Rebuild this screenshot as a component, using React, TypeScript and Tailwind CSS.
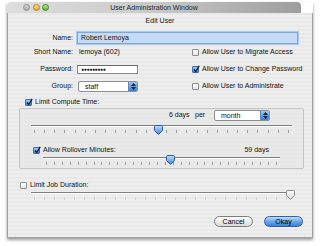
import React from "react";

function Check({ on }: { on?: boolean }) {
  return (
    <span
      className={[
        "relative mr-[1px] inline-block h-[7px] w-[7px] shrink-0 rounded-[1px] border",
        on
          ? "border-[#3a6db5] bg-gradient-to-b from-[#a9cdf5] to-[#3f86d9]"
          : "border-[#8f8f8f] bg-gradient-to-b from-white to-[#e6e6e6]",
      ].join(" ")}
    >
      {on && (
        <svg width="7" height="8" viewBox="0 0 7 8" className="absolute left-[0px] top-[-2px]">
          <path d="M1 4.5 L2.8 6.5 L6.2 0.8" fill="none" stroke="#1a1a2e" strokeWidth="1.3" />
        </svg>
      )}
    </span>
  );
}

function Popup({ label, w }: { label: string; w: string }) {
  return (
    <div className={`flex h-[11px] ${w} items-stretch overflow-hidden rounded-[2px] border border-[#8e8e8e] bg-white`}>
      <span className="flex-1 pl-[6px] leading-[9px]">{label}</span>
      <span className="flex w-[9px] flex-col items-center justify-center gap-[1px] border-l border-[#5a86c4] bg-gradient-to-b from-[#9fc6f1] to-[#3d7fd2]">
        <svg width="5" height="3" viewBox="0 0 5 3"><path d="M0 3 L2.5 0 L5 3 Z" fill="#13243d" /></svg>
        <svg width="5" height="3" viewBox="0 0 5 3"><path d="M0 0 L2.5 3 L5 0 Z" fill="#13243d" /></svg>
      </span>
    </div>
  );
}

function Thumb({ left, blue }: { left: string; blue?: boolean }) {
  return (
    <svg width="9" height="10" viewBox="0 0 9 10" className="absolute top-0 -ml-[4.5px]" style={{ left }}>
      <defs>
        <linearGradient id={blue ? "tb" : "tg"} x1="0" y1="0" x2="0" y2="1">
          <stop offset="0" stopColor={blue ? "#c5defa" : "#ffffff"} />
          <stop offset="1" stopColor={blue ? "#3f83d6" : "#d6d6d6"} />
        </linearGradient>
      </defs>
      <path
        d="M0.5 1.5 Q0.5 0.5 1.5 0.5 H7.5 Q8.5 0.5 8.5 1.5 V5.5 L4.5 9.5 L0.5 5.5 Z"
        fill={`url(#${blue ? "tb" : "tg"})`}
        stroke={blue ? "#2f5c99" : "#8a8a8a"}
        strokeWidth="1"
      />
    </svg>
  );
}

function Slider({ w, ml, pos, ticks, blue = true, faint }: { w: string; ml: string; pos: number; ticks: number; blue?: boolean; faint?: boolean }) {
  return (
    <div className={`relative h-[10px] ${w} ${ml}`}>
      <div className="mt-[2px] h-[2px] border-b border-white bg-[#7d7d7d]" />
      <div className="mt-[3px] flex h-[3px] justify-between px-[3px]">
        {Array.from({ length: ticks }).map((_, i) => (
          <span key={i} className={faint ? "w-px bg-[#d2d2d2]" : "w-px bg-[#9a9a9a]"} />
        ))}
      </div>
      <Thumb left={`${pos * 100}%`} blue={blue} />
    </div>
  );
}

export default function App() {
  return (
    <div className="h-[246px] w-[322px] overflow-hidden bg-white pl-[7px] pt-[2px] font-['Liberation_Sans',sans-serif] text-[7px] text-[#111]">
      <div className="flex h-[236px] w-[306px] flex-col shadow-[0_2px_3px_rgba(0,0,0,0.4)]">
        {/* title bar */}
        <div className="grid h-[11px] w-[294px] grid-cols-[1fr_auto_1fr] items-center rounded-t-[4px] bg-gradient-to-r from-[#dedede] via-[#c9c9c9] to-[#9d9d9d] text-[#1f1f1f]">
          <div className="flex gap-[2.5px] pl-[16px]">
            <span className="h-[7px] w-[7px] rounded-full border border-[#8d8d8d] bg-gradient-to-b from-[#d9d9d9] to-[#a9a9a9]" />
            <span className="h-[7px] w-[7px] rounded-full border border-[#b5830f] bg-gradient-to-b from-[#ffe28a] to-[#f0a416]" />
            <span className="h-[7px] w-[7px] rounded-full border border-[#3c8a1f] bg-gradient-to-b from-[#bff08a] to-[#4cb52a]" />
          </div>
          <span className="leading-[11px]">User Administration Window</span>
          <span />
        </div>

        {/* body */}
        <div className="flex flex-1 flex-col border-x border-b border-[#a0a0a0] bg-[repeating-linear-gradient(0deg,#eeeeee_0px,#eeeeee_2px,#e8e8e8_2px,#e8e8e8_4px)]">
          <div className="pt-[3px] text-center leading-[10px]">Edit User</div>

          <div className="mt-[6px] flex h-[12px] items-center">
            <span className="w-[65px] text-right">Name:</span>
            <div className="ml-[4px] flex h-[12px] w-[221px] items-center border border-[#7ea6d9] bg-[#c4dbf6] pl-[3px] shadow-[0_0_0_1px_#a9c8ee]">
              Robert Lemoya
            </div>
          </div>

          <div className="flex">
            <div className="flex w-[184px] flex-col">
              <div className="flex h-[17px] items-center">
                <span className="w-[65px] text-right">Short Name:</span>
                <span className="ml-[6px]">lemoya (602)</span>
              </div>
              <div className="flex h-[17px] items-center">
                <span className="w-[65px] text-right">Password:</span>
                <div className="ml-[4px] flex h-[9px] w-[61px] items-center border border-[#8a8a8a] border-t-[#6a6a6a] bg-white pl-[3px] text-[5px] tracking-[-0.3px]">
                  ●●●●●●●●●
                </div>
              </div>
              <div className="flex h-[17px] items-center">
                <span className="w-[65px] text-right">Group:</span>
                <div className="ml-[5px]">
                  <Popup label="staff" w="w-[60px]" />
                </div>
              </div>
            </div>
            <div className="flex flex-col">
              <div className="flex h-[17px] items-center gap-[2px]">
                <Check />
                <span>Allow User to Migrate Access</span>
              </div>
              <div className="flex h-[17px] items-center gap-[2px]">
                <Check on />
                <span>Allow User to Change Password</span>
              </div>
              <div className="flex h-[17px] items-center gap-[2px]">
                <Check />
                <span>Allow User to Administrate</span>
              </div>
            </div>
          </div>

          <div className="ml-[17px] mt-[2px] flex h-[10px] items-center gap-[2px]">
            <Check on />
            <span>Limit Compute Time:</span>
          </div>

          {/* group box */}
          <div className="ml-[11px] mt-[1px] flex h-[61px] w-[285px] flex-col rounded-[2px] border border-[#c4c4c4] bg-[#e6e6e6]/60">
            <div className="mt-[1px] flex h-[11px] items-center">
              <span className="ml-[149px] w-[25px]">6 days</span>
              <span className="ml-[1px] w-[19px]">per</span>
              <Popup label="month" w="w-[56px]" />
            </div>
            <div className="mt-[2px]">
              <Slider w="w-[261px]" ml="ml-[11px]" pos={0.487} ticks={26} />
            </div>
            <div className="mt-[10px] flex h-[10px] items-center justify-between pl-[13px] pr-[34px]">
              <div className="flex items-center gap-[2px]">
                <Check on />
                <span>Allow Rollover Minutes:</span>
              </div>
              <span>59 days</span>
            </div>
            <Slider w="w-[237px]" ml="ml-[23px]" pos={0.54} ticks={30} />
          </div>

          <div className="ml-[12px] mt-[12px] flex h-[9px] items-center gap-[2px]">
            <Check />
            <span>Limit Job Duration:</span>
          </div>
          <Slider w="w-[259px]" ml="ml-[23px]" pos={1} ticks={26} blue={false} faint />

          <div className="mt-[16px] flex justify-end gap-[11px] pr-[9px]">
            <button className="h-[11px] w-[39px] rounded-full border border-[#7d7d7d] bg-gradient-to-b from-white via-[#ececec] to-[#d9d9d9] leading-[9px] text-black">
              Cancel
            </button>
            <button className="h-[11px] w-[39px] rounded-full border border-[#2f5fa6] bg-gradient-to-b from-[#c4ddfa] via-[#6aa6ec] to-[#3b7fd6] leading-[9px] text-black">
              Okay
            </button>
          </div>
        </div>
      </div>
    </div>
  );
}
